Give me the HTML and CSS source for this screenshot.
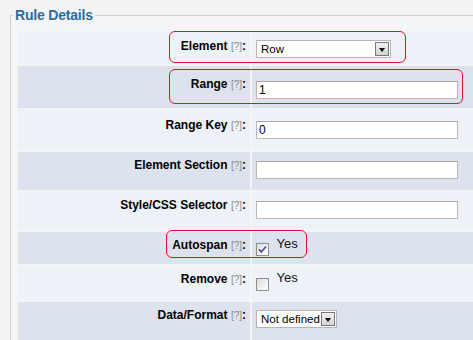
FILE: index.html
```html
<!DOCTYPE html>
<html lang="en">
<head>
    <meta charset="UTF-8">
    <title>Rule Details</title>
    <link rel="stylesheet" href="styles.css">
</head>
<body>
    <div class="page">
        <fieldset class="panel">
            <legend>Rule Details</legend>
            <table class="form">
                <tr class="row-element">
                    <td class="label">Element <span class="help">[?]</span>:</td>
                    <td class="value">
                        <span class="select select-wide"><span class="select-text">Row</span><span class="select-btn"></span></span>
                    </td>
                </tr>
                <tr class="row-range">
                    <td class="label">Range <span class="help">[?]</span>:</td>
                    <td class="value"><span class="input">1</span></td>
                </tr>
                <tr class="row-key">
                    <td class="label">Range Key <span class="help">[?]</span>:</td>
                    <td class="value"><span class="input">0</span></td>
                </tr>
                <tr class="row-section">
                    <td class="label">Element Section <span class="help">[?]</span>:</td>
                    <td class="value"><span class="input"></span></td>
                </tr>
                <tr class="row-style">
                    <td class="label">Style/CSS Selector <span class="help">[?]</span>:</td>
                    <td class="value"><span class="input"></span></td>
                </tr>
                <tr class="row-autospan">
                    <td class="label">Autospan <span class="help">[?]</span>:</td>
                    <td class="value">
                        <span class="check">
                            <svg width="13" height="13" viewBox="0 0 13 13">
                                <defs>
                                    <linearGradient id="cb" x1="0" y1="0" x2="1" y2="1">
                                        <stop offset="0" stop-color="#dcdcdc"/>
                                        <stop offset="1" stop-color="#ffffff"/>
                                    </linearGradient>
                                </defs>
                                <rect x="0.5" y="0.5" width="12" height="12" fill="url(#cb)" stroke="#8e8f8f"/>
                                <path d="M3 6.2 L5.3 9 L10 3.4" fill="none" stroke="#3d4fa0" stroke-width="1.6"/>
                            </svg>
                        </span>
                        <span class="yes">Yes</span>
                    </td>
                </tr>
                <tr class="row-remove">
                    <td class="label">Remove <span class="help">[?]</span>:</td>
                    <td class="value">
                        <span class="check">
                            <svg width="13" height="13" viewBox="0 0 13 13">
                                <rect x="0.5" y="0.5" width="12" height="12" fill="url(#cb)" stroke="#8e8f8f"/>
                            </svg>
                        </span>
                        <span class="yes">Yes</span>
                    </td>
                </tr>
                <tr class="row-format">
                    <td class="label">Data/Format <span class="help">[?]</span>:</td>
                    <td class="value">
                        <span class="select select-small"><span class="select-text">Not defined</span><span class="select-btn"></span></span>
                    </td>
                </tr>
            </table>
        </fieldset>

        <!-- red highlight marks drawn over the form -->
        <div class="mark mark-element"></div>
        <div class="mark mark-range"></div>
        <div class="mark mark-autospan"></div>
    </div>
</body>
</html>
```

FILE: styles.css
```css
body {
    margin: 0;
    background-color: #f3f3f3;
    font-family: "Liberation Sans", Arial, sans-serif;
    overflow: hidden;
}

.page {
    position: relative;
    width: 473px;
    height: 340px;
    padding-top: 7px;
    box-sizing: border-box;
    overflow: hidden;
}

.panel {
    margin: 0 0 0 10px;
    padding: 6px 0 0 5px;
    border: 1px solid #cfcfcf;
    border-right: none;
    border-bottom: none;
    background-color: #f4f5f6;
}

.panel legend {
    margin-left: -3px;
    padding: 0 2px;
    font-size: 14px;
    line-height: 16px;
    font-weight: bold;
    letter-spacing: -0.2px;
    color: #2c6ca6;
}

.form {
    border-spacing: 2px;
    width: calc(100% + 2px);
}

.form td {
    vertical-align: top;
    padding: 0;
}

.label {
    width: 228px;
    padding: 8px 4px 0 0 !important;
    text-align: right;
    font-size: 12px;
    font-weight: bold;
    color: #000;
    line-height: 14px;
}

.help {
    font-size: 10px;
    font-weight: normal;
    color: #8a8a8a;
}

.value {
    padding: 9px 0 0 4px !important;
}

.form tr:nth-child(odd) td {
    background-color: #edf1f8;
}

.form tr:nth-child(even) td {
    background-color: #dde3ee;
}

.row-element { height: 33px; }
.row-range { height: 42px; }
.row-key { height: 40px; }
.row-section { height: 38px; }
.row-style { height: 38px; }
.row-autospan { height: 32px; }
.row-remove { height: 34px; }
.row-format { height: 40px; }

.row-element .value { padding-top: 9px !important; }
.row-range .label { padding-top: 11px !important; }
.row-range .value { padding-top: 15px !important; }
.row-key .value { padding-top: 11px !important; }
.row-section .label { padding-top: 6px !important; }
.row-style .label { padding-top: 6px !important; }
.row-autospan .label { padding-top: 6px !important; }
.row-remove .label { padding-top: 6px !important; }
.row-format .label { padding-top: 6px !important; }
.row-format .value { padding-top: 8px !important; }

.input {
    display: block;
    width: 202px;
    height: 18px;
    box-sizing: border-box;
    border: 1px solid #b9b9b9;
    border-top-color: #a9a9a9;
    background-color: #fff;
    padding: 1px 2px;
    font-size: 12px;
    line-height: 14px;
    color: #000;
}

.select {
    display: flex;
    align-items: center;
    height: 18px;
    box-sizing: border-box;
    border: 1px solid #b5b5b5;
    background-color: #fff;
    font-size: 11.5px;
    color: #000;
}

.select-wide { width: 135px; }
.select-small { width: 81px; }

.select-text {
    flex: 1;
    padding-left: 4px;
    line-height: 14px;
    white-space: nowrap;
    overflow: hidden;
}

.select-btn {
    position: relative;
    flex: none;
    width: 14px;
    height: 14px;
    margin-right: 1px;
    box-sizing: border-box;
    border: 1px solid #7a7a7a;
    background: linear-gradient(#f2f2f2, #d2d2d2);
}

.select-btn::after {
    content: "";
    position: absolute;
    left: 3px;
    top: 5px;
    border-left: 3.5px solid transparent;
    border-right: 3.5px solid transparent;
    border-top: 4px solid #000;
}

.check {
    display: inline-block;
    vertical-align: top;
    margin-top: 2px;
    line-height: 0;
}

.yes {
    display: inline-block;
    vertical-align: top;
    margin-left: 3px;
    margin-top: -5px;
    font-size: 13px;
    line-height: 15px;
    color: #111;
}

.row-autospan .check { margin-top: 2px; }
.row-remove .check { margin-top: 3px; }

.mark {
    position: absolute;
    border: 1px solid #e5141c;
    border-radius: 6px;
}

.mark-element {
    left: 169px;
    top: 31px;
    width: 235px;
    height: 30px;
}

.mark-range {
    left: 169px;
    top: 69px;
    width: 292px;
    height: 33px;
}

.mark-autospan {
    left: 166px;
    top: 230px;
    width: 139px;
    height: 26px;
}
```
